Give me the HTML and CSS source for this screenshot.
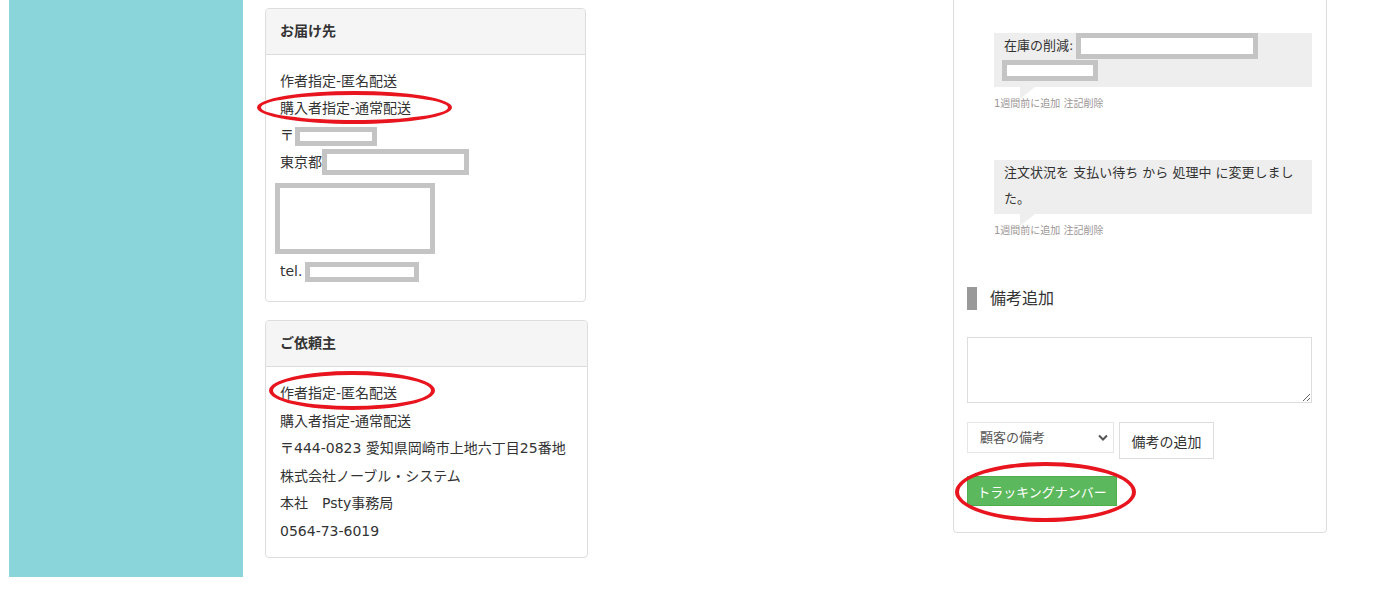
FILE: index.html
```html
<!DOCTYPE html>
<html lang="ja">
<head>
<meta charset="UTF-8">
<meta name="viewport" content="width=device-width, initial-scale=1.0">
<title>注文詳細</title>
<link rel="stylesheet" href="styles.css">
</head>
<body>

<div class="page">
  <aside class="sidebar"></aside>

  <div class="left-col">
    <section class="card">
      <div class="card-head">お届け先</div>
      <div class="card-body">
        <div>作者指定-匿名配送</div>
        <div class="marked">購入者指定-通常配送<span class="circle circle-a"></span></div>
        <div>〒<span class="redact r-zip"></span></div>
        <div>東京都<span class="redact r-city"></span></div>
        <div class="redact r-block"></div>
        <div class="tel-line">tel. <span class="redact r-tel"></span></div>
      </div>
    </section>

    <section class="card card-sender">
      <div class="card-head">ご依頼主</div>
      <div class="card-body sender-body">
        <div class="marked">作者指定-匿名配送<span class="circle circle-b"></span></div>
        <div>購入者指定-通常配送</div>
        <div class="nowrap">〒444-0823 愛知県岡崎市上地六丁目25番地</div>
        <div>株式会社ノーブル・システム</div>
        <div>本社　Psty事務局</div>
        <div>0564-73-6019</div>
      </div>
    </section>
  </div>

  <div class="right-col">
    <section class="card notes-card">
      <ul class="notes">
        <li class="note">
          <div class="bubble">在庫の削減: <span class="redact r-stock1"></span><br><span class="redact r-stock2"></span></div>
          <div class="note-meta">1週間前に追加 <a class="note-del">注記削除</a></div>
        </li>
        <li class="note">
          <div class="bubble">注文状況を 支払い待ち から 処理中 に変更しました。</div>
          <div class="note-meta">1週間前に追加 <a class="note-del">注記削除</a></div>
        </li>
      </ul>

      <h3 class="notes-title">備考追加</h3>
      <textarea class="note-input"></textarea>

      <div class="note-row">
        <div class="select-wrap">
          <select class="note-type">
            <option>顧客の備考</option>
            <option>プライベート</option>
          </select>
          <svg class="chev" width="10" height="7" viewBox="0 0 10 7"><path d="M1 1.5 L5 5.5 L9 1.5" fill="none" stroke="#555" stroke-width="2"/></svg>
        </div>
        <button class="btn-add">備考の追加</button>
      </div>

      <div class="marked tracking">
        <button class="btn-tracking">トラッキングナンバー</button>
        <span class="circle circle-c"></span>
      </div>
    </section>
  </div>
</div>

</body>
</html>
```

FILE: styles.css
```css
html, body {
  margin: 0;
  padding: 0;
  background: #fff;
  overflow: hidden;
}
body {
  font-family: "DejaVu Sans", "Noto Sans CJK JP", sans-serif;
  font-size: 14px;
  color: #333;
}
.page {
  display: flex;
  align-items: flex-start;
  height: 604px;
}
.sidebar {
  width: 234px;
  height: 577px;
  margin-left: 9px;
  background-color: #8ad5da;
  flex-shrink: 0;
}
.left-col {
  width: 322px;
  margin-left: 22px;
  padding-top: 8px;
  flex-shrink: 0;
}
.card {
  border: 1px solid #ddd;
  border-radius: 4px;
  background: #fff;
}
.card-sender {
  margin-top: 18px;
  width: 321px;
}
.left-col .card:first-child {
  width: 319px;
}
.card-head {
  height: 45px;
  line-height: 44px;
  padding: 0 14px;
  background-color: #f5f5f5;
  border-bottom: 1px solid #ddd;
  border-radius: 4px 4px 0 0;
  font-weight: bold;
}
.card-body {
  padding: 13px 14px 16px;
  line-height: 27px;
}
.sender-body {
  line-height: 27.5px;
  padding-bottom: 12px;
}
.nowrap {
  white-space: nowrap;
}
.marked {
  position: relative;
}

/* grey boxes that hide personal data */
.redact {
  display: inline-block;
  box-sizing: border-box;
  border: 5px solid #c4c4c4;
  background: #fff;
  vertical-align: middle;
}
.r-zip {
  width: 82px;
  height: 19px;
  margin-left: 1px;
}
.r-city {
  width: 147px;
  height: 26px;
  margin-top: -2px;
}
.r-block {
  display: block;
  width: 160px;
  height: 71px;
  margin: 7px 0 0 -5px;
}
.tel-line {
  margin-top: 4px;
}
.r-tel {
  width: 114px;
  height: 20px;
  margin-left: -2px;
}

/* red hand-drawn marks */
.circle {
  position: absolute;
  box-sizing: border-box;
  border: 4px solid #e8151f;
  border-radius: 50%;
  pointer-events: none;
}
.circle-a {
  left: -23px;
  top: -4px;
  width: 195px;
  height: 33px;
}
.circle-b {
  left: -11px;
  top: -9px;
  width: 166px;
  height: 39px;
}
.circle-c {
  left: -12px;
  top: -14px;
  width: 181px;
  height: 60px;
}

/* right column: notes */
.right-col {
  width: 374px;
  margin-left: 366px;
  flex-shrink: 0;
}
.notes-card {
  margin-top: -20px;
  padding: 52px 14px 26px 13px;
}
.notes {
  list-style: none;
  margin: 0;
  padding: 0 0 0 27px;
}
.note {
  margin-bottom: 49px;
}
.bubble {
  position: relative;
  background-color: #eee;
  padding: 0 10px 2px;
  line-height: 26px;
  font-size: 13px;
}
.bubble::after {
  content: "";
  position: absolute;
  left: 26px;
  bottom: -12px;
  width: 0;
  height: 0;
  border-top: 12px solid #eee;
  border-right: 15px solid transparent;
}
.r-stock1 {
  width: 182px;
  height: 26px;
  margin-left: -2px;
  vertical-align: top;
}
.r-stock2 {
  width: 96px;
  height: 21px;
  margin-left: -2px;
  margin-top: 1px;
  vertical-align: top;
}
.note-meta {
  margin-top: 10px;
  font-size: 10px;
  line-height: 14px;
  color: #9c9696;
}
.note-del {
  color: #9c9696;
}
.notes-title {
  margin: 0;
  height: 23px;
  line-height: 23px;
  border-left: 10px solid #999;
  padding-left: 13px;
  font-size: 16px;
  font-weight: normal;
  color: #333;
}
.note-input {
  display: block;
  box-sizing: border-box;
  width: 345px;
  height: 66px;
  margin-top: 27px;
  border: 1px solid #ddd;
  border-radius: 0;
  font-family: inherit;
}
.note-row {
  display: flex;
  align-items: flex-start;
  gap: 5px;
  margin-top: 19px;
}
.select-wrap {
  position: relative;
}
.note-type {
  appearance: none;
  -webkit-appearance: none;
  box-sizing: border-box;
  width: 147px;
  height: 31px;
  border: 1px solid #e6e6e6;
  border-radius: 0;
  background: #fff;
  padding: 0 12px;
  font-family: inherit;
  font-size: 13px;
  color: #555;
}
.chev {
  position: absolute;
  right: 6px;
  top: 12px;
}
.btn-add {
  box-sizing: border-box;
  width: 95px;
  height: 37px;
  border: 1px solid #ddd;
  background: #fff;
  font-family: inherit;
  font-size: 14px;
  color: #333;
  padding: 0;
}
.tracking {
  margin-top: 17px;
  width: 150px;
}
.btn-tracking {
  display: block;
  box-sizing: border-box;
  width: 150px;
  height: 30px;
  background-color: #5cb85c;
  border: 1px solid #4cae4c;
  color: #fff;
  font-family: inherit;
  font-size: 13px;
  padding: 0;
}
```
